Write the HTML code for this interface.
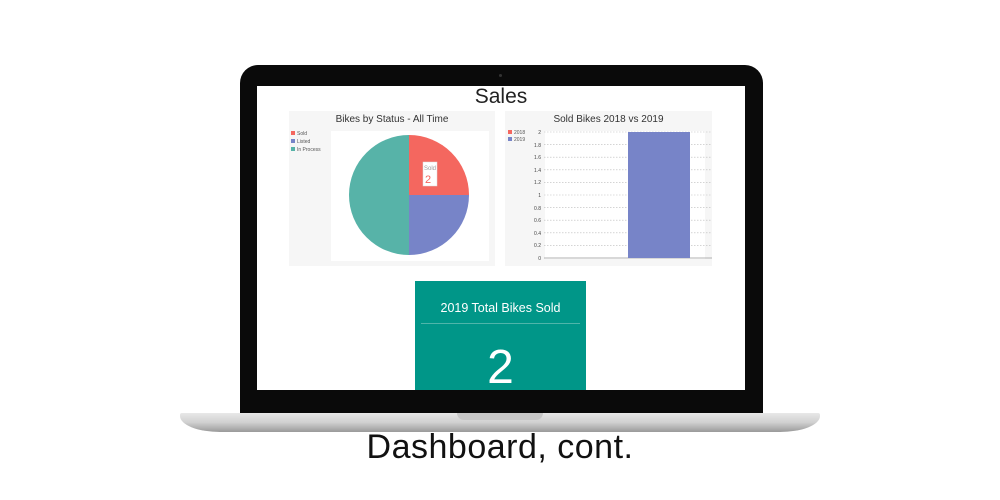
<!DOCTYPE html>
<html><head><meta charset="utf-8"><style>
body{margin:0;width:1000px;height:500px;background:#fff;position:relative;overflow:hidden;font-family:"Liberation Sans",sans-serif}
.a{position:absolute}
</style></head><body>
<!-- bezel -->
<div class="a" style="left:240px;top:65px;width:523px;height:352px;background:#0a0a0a;border-radius:18px 18px 4px 4px"></div>
<div class="a" style="left:499px;top:74px;width:3px;height:3px;border-radius:50%;background:#333"></div>
<!-- screen -->
<div class="a" style="left:257px;top:86px;width:488px;height:304px;background:#fff;overflow:hidden">
  <div class="a" style="left:0;top:0;width:488px;text-align:center;font-size:21px;color:#222;line-height:22px">Sales</div>
  <!-- pie panel -->
  <div class="a" style="left:32px;top:25px;width:206px;height:155px;background:#f6f6f6"></div>
  <div class="a" style="left:74px;top:45px;width:158px;height:130px;background:#fff"></div>
  <div class="a" style="left:32px;top:28px;width:206px;text-align:center;font-size:10px;color:#333">Bikes by Status - All Time</div>
  <div class="a" style="left:34px;top:44px;font-size:5px;color:#555;line-height:8px">
    <div><span style="display:inline-block;width:4px;height:4px;background:#f4675f;margin-right:2px"></span>Sold</div>
    <div><span style="display:inline-block;width:4px;height:4px;background:#7784c8;margin-right:2px"></span>Listed</div>
    <div><span style="display:inline-block;width:4px;height:4px;background:#57b3a8;margin-right:2px"></span>In Process</div>
  </div>
  <svg class="a" style="left:0;top:0" width="488" height="304">
    <path d="M152 109 L152 49 A60 60 0 0 1 212 109 Z" fill="#f4675f"/>
    <path d="M152 109 L212 109 A60 60 0 0 1 152 169 Z" fill="#7784c8"/>
    <path d="M152 109 L152 169 A60 60 0 0 1 152 49 Z" fill="#57b3a8"/>
    <rect x="166" y="76" width="14" height="24" fill="#fff" stroke="#ddd" stroke-width="0.5"/>
    <text x="167" y="84" font-size="6" fill="#999" font-family="Liberation Sans">Sold</text>
    <text x="168" y="97" font-size="11" fill="#f4675f" font-family="Liberation Sans">2</text>
  </svg>
  <!-- bar panel -->
  <div class="a" style="left:248px;top:25px;width:207px;height:155px;background:#f6f6f6"></div>
  <div class="a" style="left:288px;top:45px;width:160px;height:128px;background:#fff"></div>
  <div class="a" style="left:248px;top:28px;width:207px;text-align:center;font-size:10px;color:#333">Sold Bikes 2018 vs 2019</div>
  <div class="a" style="left:251px;top:44px;font-size:5px;color:#555;line-height:7px">
    <div><span style="display:inline-block;width:4px;height:4px;background:#f4675f;margin-right:2px"></span>2018</div>
    <div><span style="display:inline-block;width:4px;height:4px;background:#7784c8;margin-right:2px"></span>2019</div>
  </div>
  <svg class="a" style="left:0;top:0" width="488" height="304" font-family="Liberation Sans" font-size="5" fill="#444">
    <g stroke="#bbb" stroke-width="0.6" stroke-dasharray="1.5,1.5">
      <line x1="287" x2="455" y1="46" y2="46"/><line x1="287" x2="455" y1="58.6" y2="58.6"/>
      <line x1="287" x2="455" y1="71.2" y2="71.2"/><line x1="287" x2="455" y1="83.8" y2="83.8"/>
      <line x1="287" x2="455" y1="96.4" y2="96.4"/><line x1="287" x2="455" y1="109" y2="109"/>
      <line x1="287" x2="455" y1="121.6" y2="121.6"/><line x1="287" x2="455" y1="134.2" y2="134.2"/>
      <line x1="287" x2="455" y1="146.8" y2="146.8"/><line x1="287" x2="455" y1="159.4" y2="159.4"/>
    </g>
    <line x1="287" x2="455" y1="172" y2="172" stroke="#999" stroke-width="0.8"/>
    <rect x="371" y="46" width="62" height="126" fill="#7784c8"/>
    <g text-anchor="end">
      <text x="284" y="48">2</text><text x="284" y="61">1.8</text><text x="284" y="73">1.6</text>
      <text x="284" y="86">1.4</text><text x="284" y="98">1.2</text><text x="284" y="111">1</text>
      <text x="284" y="124">0.8</text><text x="284" y="136">0.6</text><text x="284" y="149">0.4</text>
      <text x="284" y="161">0.2</text><text x="284" y="174">0</text>
    </g>
  </svg>
  <!-- teal box -->
  <div class="a" style="left:158px;top:195px;width:171px;height:120px;background:#009688;color:#fff;text-align:center">
    <div style="font-size:12.5px;margin-top:20px">2019 Total Bikes Sold</div>
    <div style="margin:8px 6px 0;height:1px;background:#4fb5aa"></div>
    <div style="font-size:48px;line-height:48px;margin-top:20px;font-weight:300">2</div>
  </div>
</div>
<!-- base -->
<div class="a" style="left:180px;top:413px;width:640px;height:19px;border-radius:2px 2px 40px 40px/2px 2px 16px 16px;background:linear-gradient(#e8e8e8,#d0d0d0 50%,#9a9a9a)"></div>
<div class="a" style="left:457px;top:413px;width:86px;height:7px;border-radius:0 0 8px 8px;background:#c8c8c8"></div>
<div class="a" style="left:0;top:428px;width:1000px;text-align:center;font-size:34px;color:#111;letter-spacing:0.5px">Dashboard, cont.</div>
</body></html>
